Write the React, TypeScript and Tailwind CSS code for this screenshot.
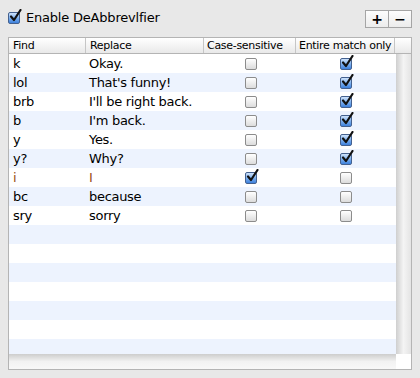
import React from "react";

type Rule = { find: string; replace: string; caseSensitive: boolean; entire: boolean; odd?: boolean };

const rules: Rule[] = [
    { find: "k", replace: "Okay.", caseSensitive: false, entire: true },
    { find: "lol", replace: "That's funny!", caseSensitive: false, entire: true },
    { find: "brb", replace: "I'll be right back.", caseSensitive: false, entire: true },
    { find: "b", replace: "I'm back.", caseSensitive: false, entire: true },
    { find: "y", replace: "Yes.", caseSensitive: false, entire: true },
    { find: "y?", replace: "Why?", caseSensitive: false, entire: true },
    { find: "i", replace: "I", caseSensitive: true, entire: false, odd: true },
    { find: "bc", replace: "because", caseSensitive: false, entire: false },
    { find: "sry", replace: "sorry", caseSensitive: false, entire: false },
];

const TOTAL_ROWS = 16;

// Aqua-ish checkbox, checkmark sticks out over the top right
function Check({ checked }: { checked: boolean }) {
    return (
        <span className="relative inline-block w-[12px] h-[12px]">
            <span
                className={
                    checked
                        ? "absolute inset-0 rounded-[2px] border border-[#44618f] bg-gradient-to-b from-[#cfe3fb] via-[#7fb1ee] to-[#3c80dc]"
                        : "absolute inset-0 rounded-[2px] border border-[#8c8c8c] bg-gradient-to-b from-[#ffffff] to-[#dcdcdc]"
                }
            />
            {checked && (
                <svg className="absolute left-[1px] top-[-3px]" width="13" height="13" viewBox="0 0 13 13">
                    <path d="M2 7.5 L5 11 L11.5 1" fill="none" stroke="#111" strokeWidth="2.2" strokeLinecap="round" strokeLinejoin="round" />
                </svg>
            )}
        </span>
    );
}

export default function App() {
    const rows = Array.from({ length: TOTAL_ROWS }, (_, i) => rules[i]);

    return (
        <div
            className="w-[420px] h-[378px] bg-[#e8e8e8] flex flex-col px-[8px] pb-[8px] text-black"
            style={{ fontFamily: '"DejaVu Sans", Verdana, sans-serif' }}
        >
            {/* Top bar */}
            <div className="h-[37px] flex items-start justify-between">
                <label className="flex items-center gap-[6px] mt-[11px] text-[13px] leading-[14px]">
                    <Check checked={true} />
                    <span className="tracking-[-0.2px]">Enable DeAbbrevlfier</span>
                </label>
                <div className="flex mt-[10px] h-[18px] border border-[#a5a5a5] bg-gradient-to-b from-[#fdfdfd] to-[#ececec]">
                    <button className="w-[23px] flex items-center justify-center border-r border-[#a5a5a5] text-[14px] font-bold leading-none">+</button>
                    <button className="w-[22px] flex items-center justify-center text-[14px] font-bold leading-none">−</button>
                </div>
            </div>

            {/* Table */}
            <div className="flex-1 flex flex-col border border-[#b4b4b4] bg-white overflow-hidden">
                <div className="flex-1 flex min-h-0">
                    <div className="flex-1 flex flex-col min-w-0">
                        {/* Header */}
                        <div className="h-[16px] flex border-b border-[#b4b4b4] bg-gradient-to-b from-[#ffffff] to-[#e9e9e9] text-[11px] leading-[15px] tracking-[-0.3px]">
                            <div className="w-[77px] pl-[4px] border-r border-[#c6c6c6]">Find</div>
                            <div className="w-[118px] pl-[4px] border-r border-[#c6c6c6]">Replace</div>
                            <div className="w-[92px] pl-[3px] border-r border-[#c6c6c6] whitespace-nowrap overflow-hidden">Case-sensitive</div>
                            <div className="w-[99px] pl-[3px] border-r border-[#c6c6c6] whitespace-nowrap overflow-hidden">Entire match only</div>
                        </div>
                        {/* Rows */}
                        <div className="flex-1 overflow-hidden">
                            {rows.map((r, i) => (
                                <div
                                    key={i}
                                    className={`h-[19px] flex items-center text-[13px] leading-[19px] tracking-[-0.3px] ${i % 2 === 1 ? "bg-[#edf3fe]" : "bg-white"} ${r?.odd ? "text-[#9a4e14]" : "text-black"}`}
                                >
                                    <div className="w-[77px] pl-[4px]">{r?.find}</div>
                                    <div className="w-[118px] pl-[3px] whitespace-nowrap">{r?.replace}</div>
                                    <div className="w-[92px] flex justify-center pl-[1px]">{r && <Check checked={r.caseSensitive} />}</div>
                                    <div className="w-[99px] flex justify-center">{r && <Check checked={r.entire} />}</div>
                                </div>
                            ))}
                        </div>
                    </div>
                    {/* Vertical scrollbar */}
                    <div className="w-[15px] flex flex-col">
                        <div className="h-[16px] border-b border-[#b4b4b4] bg-gradient-to-b from-[#ffffff] to-[#e9e9e9]" />
                        <div className="flex-1 bg-gradient-to-r from-[#cfcfcf] via-[#f4f4f4] to-[#e4e4e4]" />
                    </div>
                </div>
                {/* Horizontal scrollbar */}
                <div className="h-[15px] flex">
                    <div className="flex-1 bg-gradient-to-b from-[#cdcdcd] via-[#f2f2f2] to-[#f8f8f8]" />
                    <div className="w-[15px] bg-white" />
                </div>
            </div>
        </div>
    );
}
